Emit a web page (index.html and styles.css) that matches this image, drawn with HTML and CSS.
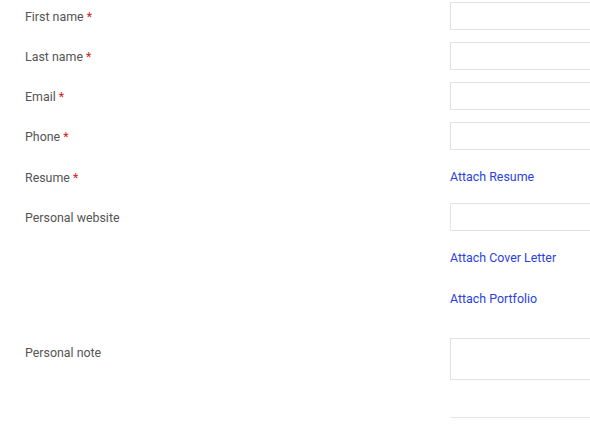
FILE: index.html
```html
<!DOCTYPE html>
<html lang="en">
<head>
    <meta charset="UTF-8">
    <meta name="viewport" content="width=device-width, initial-scale=1.0">
    <title>Application</title>
    <link rel="stylesheet" href="styles.css">
</head>
<body>

    <!-- Application form -->
    <form class="application">
        <div class="row">
            <label class="label">First name <span class="required">*</span></label>
            <div class="field"><input type="text" class="text-input"></div>
        </div>
        <div class="row">
            <label class="label">Last name <span class="required">*</span></label>
            <div class="field"><input type="text" class="text-input"></div>
        </div>
        <div class="row">
            <label class="label">Email <span class="required">*</span></label>
            <div class="field"><input type="email" class="text-input"></div>
        </div>
        <div class="row">
            <label class="label">Phone <span class="required">*</span></label>
            <div class="field"><input type="tel" class="text-input"></div>
        </div>
        <div class="row row-file">
            <label class="label">Resume <span class="required">*</span></label>
            <div class="field"><a href="#" class="attach">Attach Resume</a></div>
        </div>
        <div class="row">
            <label class="label">Personal website</label>
            <div class="field"><input type="url" class="text-input"></div>
        </div>
        <div class="row row-file">
            <span class="label"></span>
            <div class="field"><a href="#" class="attach">Attach Cover Letter</a></div>
        </div>
        <div class="row row-file">
            <span class="label"></span>
            <div class="field"><a href="#" class="attach">Attach Portfolio</a></div>
        </div>
        <div class="row row-note">
            <label class="label">Personal note</label>
            <div class="field"><textarea class="note-input"></textarea></div>
        </div>
        <div class="row row-footer">
            <span class="label"></span>
            <div class="field footer-line"></div>
        </div>
    </form>

</body>
</html>
```

FILE: styles.css
```css
/* General */
html, body {
    margin: 0;
    overflow: hidden;
}

body {
    font-family: Roboto, 'Liberation Sans', sans-serif;
    font-size: 12.4px;
    color: #555;
    background: #fff;
}

/* Form layout */
.application {
    display: flex;
    flex-direction: column;
    gap: 12px;
    padding: 2px 0 0 25px;
    width: 565px;
    overflow: hidden;
}

.row {
    display: grid;
    grid-template-columns: 425px 300px;
    align-items: center;
    min-height: 28px;
}

.row-file {
    min-height: 29px;
}

.label {
    line-height: 20px;
    padding-top: 2px;
}

.required {
    color: #d42020;
}

.text-input {
    display: block;
    box-sizing: border-box;
    width: 100%;
    height: 28px;
    margin: 0;
    border: 1px solid #e2e2e2;
    border-radius: 1px;
    background: #fff;
}

.attach {
    color: #2b3fe0;
    text-decoration: none;
    line-height: 20px;
}

/* Note */
.row-note {
    align-items: start;
    margin-top: 13px;
}

.row-note .label {
    padding-top: 5px;
}

.note-input {
    display: block;
    box-sizing: border-box;
    width: 100%;
    height: 42px;
    margin: 0;
    border: 1px solid #e2e2e2;
    resize: none;
}

.row-footer {
    min-height: 0;
    margin-top: 24px;
}

.footer-line {
    border-top: 1px solid #e6e6e6;
}
```
